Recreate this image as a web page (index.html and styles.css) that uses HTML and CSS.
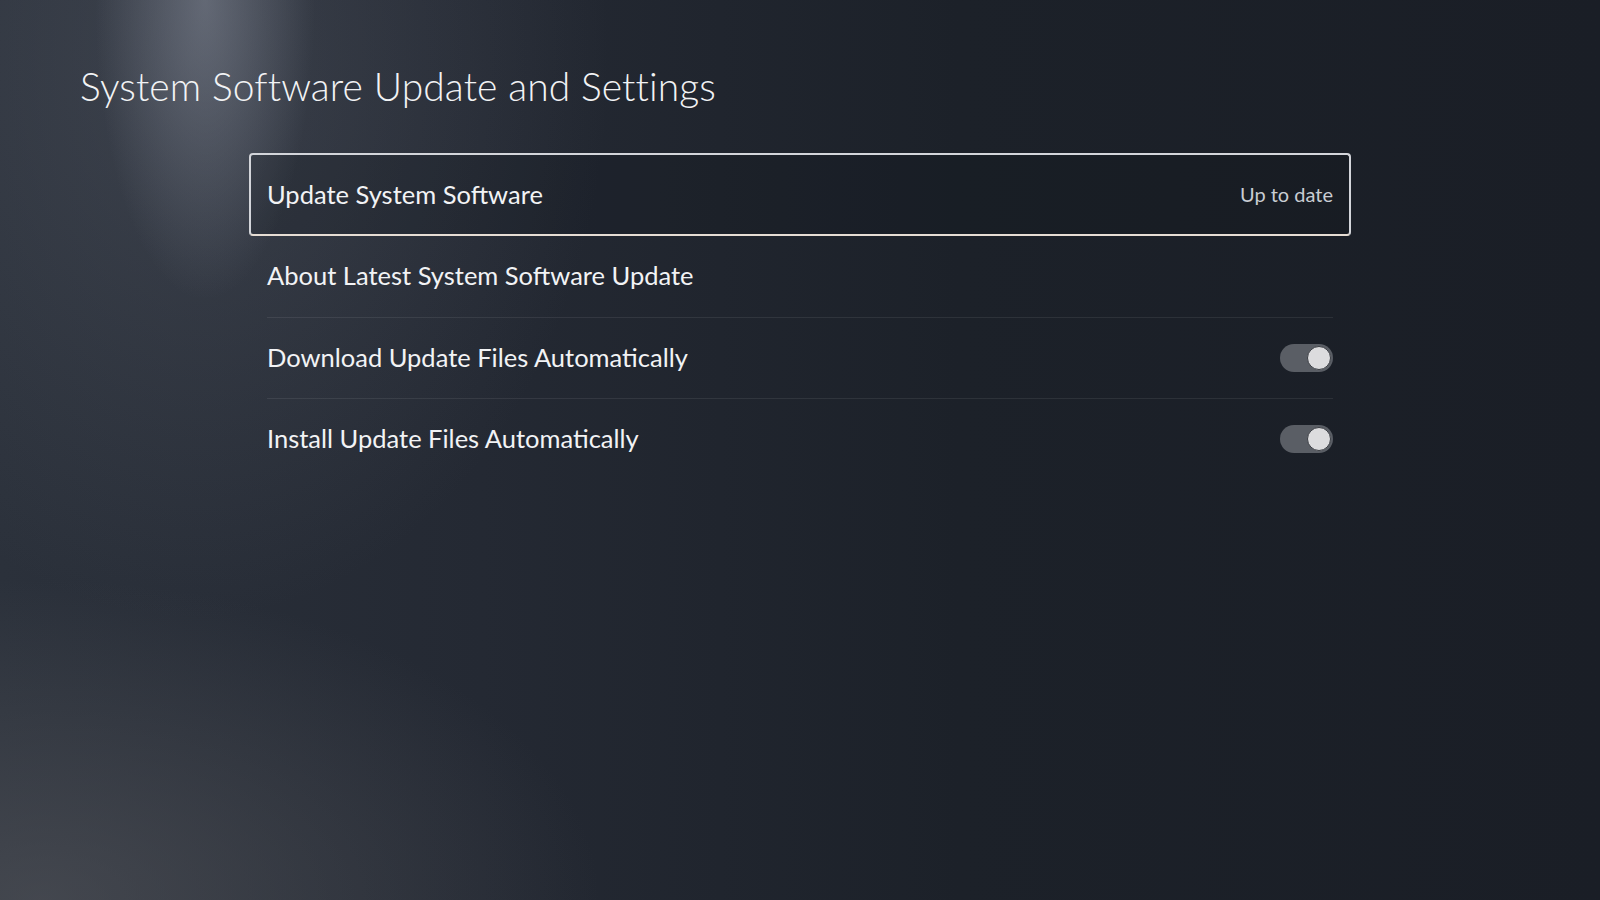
FILE: index.html
```html
<!DOCTYPE html>
<html lang="en">
<head>
    <meta charset="UTF-8">
    <meta name="viewport" content="width=device-width, initial-scale=1.0">
    <title>System Software Update and Settings</title>
    <link rel="stylesheet" href="styles.css">
</head>
<body>
    <div class="screen">
        <h1 class="page-title">System Software Update and Settings</h1>

        <div class="menu">
            <div class="menu-item focused">
                <div class="item-body">
                    <span class="item-label">Update System Software</span>
                    <span class="item-value">Up to date</span>
                </div>
            </div>

            <div class="menu-item">
                <div class="item-body">
                    <span class="item-label">About Latest System Software Update</span>
                </div>
            </div>

            <div class="menu-item">
                <div class="item-body">
                    <span class="item-label">Download Update Files Automatically</span>
                    <span class="toggle on"><span class="knob"></span></span>
                </div>
            </div>

            <div class="menu-item last">
                <div class="item-body">
                    <span class="item-label">Install Update Files Automatically</span>
                    <span class="toggle on"><span class="knob"></span></span>
                </div>
            </div>
        </div>
    </div>
</body>
</html>
```

FILE: styles.css
```css
:root {
    --bg-base: #1a1f27;
    --text-color: #f2f3f5;
    --muted-text: #c9cdd3;
    --focus-border: #d3d5da;
    --separator: rgba(255, 255, 255, 0.08);
    --track-color: #5a5e65;
    --knob-color: #dcdcde;
}

html, body {
    margin: 0;
    height: 100%;
}

body {
    font-family: Lato, "Open Sans", sans-serif;
    color: var(--text-color);
    background-color: var(--bg-base);
    background-image:
        radial-gradient(ellipse 110px 300px at 205px 0px, rgba(140, 146, 160, 0.5), rgba(140, 146, 160, 0) 100%),
        radial-gradient(ellipse 420px 560px at 190px 60px, rgba(95, 100, 112, 0.35), rgba(95, 100, 112, 0) 100%),
        radial-gradient(ellipse 560px 320px at 40px 900px, rgba(84, 86, 92, 0.6), rgba(84, 86, 92, 0) 100%),
        linear-gradient(90deg, #2b313b 0%, #242933 30%, #1c2129 60%, #1a1e26 100%);
    overflow: hidden;
}

.screen {
    padding: 61px 0 0 80px;
}

.page-title {
    margin: 0;
    font-size: 39px;
    font-weight: 300;
    line-height: 50px;
    letter-spacing: 0.1px;
}

/* settings list */
.menu {
    width: 1102px;
    margin: 42px 0 0 169px;
}

.menu-item {
    padding: 0 18px;
}

.item-body {
    display: flex;
    align-items: center;
    justify-content: space-between;
    height: 80.5px;
    border-bottom: 1px solid var(--separator);
}

.menu-item.focused {
    border: 2px solid var(--focus-border);
    border-bottom-color: #e6ddd4;
    border-radius: 4px;
    background-color: rgba(12, 15, 21, 0.18);
    padding: 0 16px;
}

.menu-item.focused .item-body {
    height: 79px;
    border-bottom: none;
}

.menu-item.last .item-body {
    border-bottom: none;
}

.item-label {
    font-size: 25.5px;
    font-weight: 400;
    margin-top: -2px;
}

.item-value {
    font-size: 20px;
    color: var(--muted-text);
    font-weight: 400;
    margin-top: -2px;
}

/* toggle switch */
.toggle {
    position: relative;
    display: inline-block;
    width: 53px;
    height: 28px;
    border-radius: 14px;
    background-color: var(--track-color);
}

.toggle .knob {
    position: absolute;
    top: 2px;
    right: 2px;
    width: 22px;
    height: 22px;
    border-radius: 50%;
    background-color: var(--knob-color);
    border: 1px solid #3a3d43;
}
```
